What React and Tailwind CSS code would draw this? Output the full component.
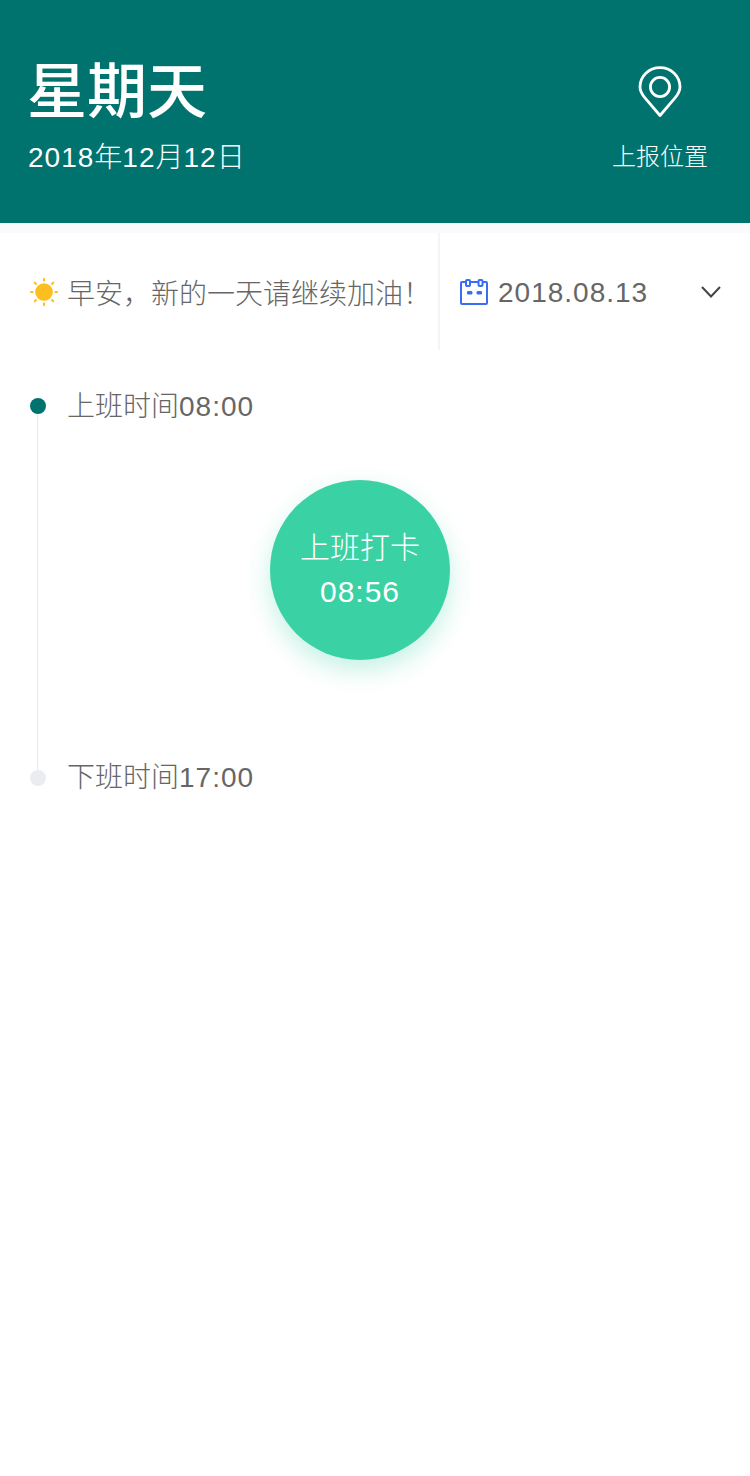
const fontCn = 'font-["Liberation_Sans","Noto_Sans_CJK_SC",sans-serif]'

// digits in the reference run a little wider than Liberation's
function Num({ children }) {
  return <span className="tracking-[1px]">{children}</span>
}

function PinIcon() {
  return (
    <svg width="44" height="52" viewBox="0 0 44 52" fill="none" stroke="#fff" strokeWidth="2.8">
      <path d="M22 49.5L7.6 32.6C4 28.6 2 25 2 21C2 10 11 1.6 22 1.6S42 10 42 21C42 25 40 28.6 36.4 32.6L22 49.5Z" strokeLinejoin="round" />
      <circle cx="22" cy="21" r="9.6" />
    </svg>
  )
}

function SunIcon() {
  const rays = [0, 45, 90, 135, 180, 225, 270, 315]
  return (
    <svg width="28" height="28" viewBox="0 0 28 28">
      <circle cx="14" cy="14" r="8.8" fill="#fdbf1f" />
      {rays.map((r) => (
        <rect key={r} x="12.9" y="0" width="2.2" height="3.6" rx="1" fill="#fdbf1f" transform={`rotate(${r} 14 14)`} />
      ))}
    </svg>
  )
}

function CalendarIcon() {
  return (
    <svg width="28" height="26" viewBox="0 0 28 26" fill="none" stroke="#3a6cf6" strokeWidth="2">
      <rect x="1" y="3" width="26" height="22" rx="1" />
      <rect x="6" y="1" width="4" height="6" rx="1" fill="#fff" />
      <rect x="18.5" y="1" width="4" height="6" rx="1" fill="#fff" />
      <rect x="7" y="12" width="5.4" height="3.4" rx="1.2" fill="#3a6cf6" stroke="none" />
      <rect x="16.6" y="12" width="5.4" height="3.4" rx="1.2" fill="#3a6cf6" stroke="none" />
    </svg>
  )
}

export default function App() {
  return (
    <div className={`${fontCn} w-[750px] h-[1476px] bg-white overflow-hidden`}>
      {/* Header */}
      <header className="h-[223px] bg-[#00736f] text-white flex justify-between pl-[28px] pr-[42px]">
        <div className="pt-[57px]">
          <div className="text-[60px] leading-[72px] font-medium -ml-[1px]">星期天</div>
          <div className="text-[28px] leading-[32px] mt-[13px] font-light"><Num>2018</Num>年<Num>12</Num>月<Num>12</Num>日</div>
        </div>
        <div className="pt-[66px] flex flex-col items-center">
          <PinIcon />
          <div className="text-[24px] leading-[30px] mt-[24px] font-light">上报位置</div>
        </div>
      </header>

      {/* Greeting and date picker */}
      <div className="h-[127px] pt-[10px] bg-[#fafafc]">
        <div className="h-[117px] bg-white flex items-center">
          <div className="w-[440px] h-full border-r-2 border-[#f4f4f7] flex items-center pl-[30px] gap-[9px]">
            <SunIcon />
            <span className="text-[28px] text-[#666] font-light whitespace-nowrap pt-[7px]">早安，新的一天请继续加油！</span>
          </div>
          <div className="flex-1 flex items-center pl-[20px] pr-[29px]">
            <CalendarIcon />
            <span className="text-[28px] text-[#666] font-light ml-[10px] pt-[2px]"><Num>2018.08.13</Num></span>
            <svg className="ml-auto" width="20" height="12" viewBox="0 0 20 12" fill="none" stroke="#444" strokeWidth="2">
              <path d="M1 1L10 10.5L19 1" />
            </svg>
          </div>
        </div>
      </div>

      {/* Timeline */}
      <div className="flex pl-[30px] pt-[35px]">
        <div className="w-[16px] flex flex-col">
          <div className="w-[16px] h-[16px] rounded-full bg-[#00736f] shrink-0 mt-[13px]" />
          <div className="w-[1px] ml-[7px] flex-1 bg-[#e8e8ec]" />
          <div className="w-[16px] h-[16px] rounded-full bg-[#ebecf0] shrink-0 mb-[13px]" />
        </div>
        <div className="ml-[21px] pt-[1px] text-[28px] leading-[42px] text-[#666] font-light">
          <div>上班时间<Num>08:00</Num></div>
          <div className="w-[180px] h-[180px] rounded-full bg-[#3ad2a4] shadow-[0_10px_24px_rgba(58,210,164,0.3)] ml-[203px] mt-[52px] mb-[97px] flex flex-col items-center justify-center text-white text-[30px]">
            <div className="leading-[44px]">上班打卡</div>
            <div className="leading-[44px]"><Num>08:56</Num></div>
          </div>
          <div>下班时间<Num>17:00</Num></div>
        </div>
      </div>
    </div>
  )
}
